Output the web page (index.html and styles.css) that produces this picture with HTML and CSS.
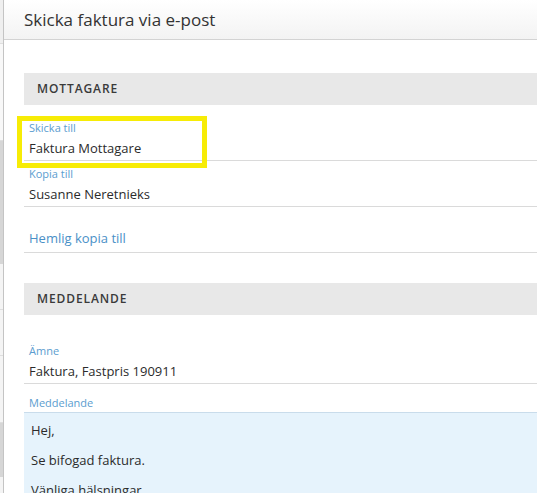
FILE: index.html
```html
<!DOCTYPE html>
<html lang="sv">
<head>
<meta charset="utf-8">
<title>Skicka faktura via e-post</title>
<link rel="stylesheet" href="styles.css">
</head>
<body>
<div class="page">
  <div class="backdrop-edge">
    <div class="seg seg-a"></div>
    <div class="seg seg-b"></div>
    <div class="seg seg-dark seg-c"></div>
    <div class="seg seg-d"></div>
    <div class="seg seg-e"></div>
    <div class="seg seg-f"></div>
    <div class="seg seg-dark seg-g"></div>
    <div class="seg seg-h"></div>
  </div>
  <div class="modal">
    <header class="modal-head">
      <h1 class="modal-title">Skicka faktura via e-post</h1>
    </header>
    <div class="modal-body">
      <section class="section">
        <h2 class="section-title">MOTTAGARE</h2>
        <div class="field field-first">
          <span class="highlight"></span>
          <div class="field-label">Skicka till</div>
          <div class="field-value">Faktura Mottagare</div>
        </div>
        <div class="field">
          <div class="field-label">Kopia till</div>
          <div class="field-value">Susanne Neretnieks</div>
        </div>
        <div class="field field-link">
          <a class="link">Hemlig kopia till</a>
        </div>
      </section>
      <section class="section section-second">
        <h2 class="section-title">MEDDELANDE</h2>
        <div class="field field-subject">
          <div class="field-label">Ämne</div>
          <div class="field-value">Faktura, Fastpris 190911</div>
        </div>
        <div class="message">
          <div class="field-label">Meddelande</div>
          <div class="message-box">
            <p>Hej,</p>
            <p>Se bifogad faktura.</p>
            <p>Vänliga hälsningar</p>
          </div>
        </div>
      </section>
    </div>
  </div>
</div>
</body>
</html>
```

FILE: styles.css
```css
html, body {
  margin: 0;
  padding: 0;
  background: #ffffff;
  overflow: hidden;
}

body {
  font-family: "Open Sans", "Noto Sans", sans-serif;
  color: #333333;
}

.page {
  display: flex;
  width: 537px;
  height: 493px;
  overflow: hidden;
}

.backdrop-edge {
  width: 3px;
  flex: none;
  display: flex;
  flex-direction: column;
  border-right: 1px solid #c4c4c4;
  background: #f4f4f4;
}

.seg { flex: none; background: #f4f4f4; border-bottom: 1px solid #dedede; }
.seg-dark { background: #d6d6d6; border-bottom-color: #d6d6d6; }
.seg-a { height: 43px; background: #efefef; }
.seg-b { height: 96px; background: #f8f8f8; }
.seg-c { height: 122px; }
.seg-d { height: 45px; }
.seg-e { height: 45px; }
.seg-f { height: 66px; }
.seg-g { height: 53px; }
.seg-h { height: 20px; border-bottom: none; }

.modal {
  flex: 1;
  min-width: 0;
  display: flex;
  flex-direction: column;
  background: #ffffff;
}

.modal-head {
  height: 39px;
  flex: none;
  padding-left: 20px;
  border-bottom: 1px solid #d3d3d3;
  background: linear-gradient(#ffffff, #f3f3f3);
  display: flex;
  align-items: center;
}

.modal-title {
  margin: 0;
  font-size: 17px;
  font-weight: 400;
  line-height: 24px;
  color: #333333;
}

.modal-body {
  padding: 33px 0 0 20px;
}

.section-title {
  margin: 0;
  height: 32px;
  line-height: 32px;
  padding-left: 13px;
  background: #e8e8e8;
  font-size: 12px;
  font-weight: 600;
  letter-spacing: 0.9px;
  color: #3a3a3a;
}

.section-second {
  margin-top: 30px;
}

.field {
  position: relative;
  padding: 6px 0 2px 5px;
  border-bottom: 1px solid #dadada;
}

.field-first {
  margin-top: 10px;
}

.field-subject {
  margin-top: 23px;
}

.field-label {
  font-size: 11px;
  line-height: 14px;
  color: #5b9dcf;
}

.field-value {
  margin-top: 3px;
  font-size: 13px;
  line-height: 20px;
  color: #2b2b2b;
}

.field-link {
  padding-top: 21px;
  padding-bottom: 4px;
}

.link {
  display: block;
  font-size: 13px;
  line-height: 20px;
  color: #4a90c7;
}

.highlight {
  position: absolute;
  left: -7px;
  top: 1px;
  width: 180px;
  height: 42px;
  border: 5px solid #f7ec06;
  pointer-events: none;
}

.message {
  padding-top: 12px;
}

.message .field-label {
  padding-left: 5px;
}

.message-box {
  margin-top: 2px;
  padding: 7px 0 0 7px;
  height: 120px;
  background: #e6f3fc;
  border-top: 1px solid #c9dceb;
  font-size: 13px;
  line-height: 20px;
  color: #2b2b2b;
}

.message-box p {
  margin: 0 0 10px 0;
}
```
